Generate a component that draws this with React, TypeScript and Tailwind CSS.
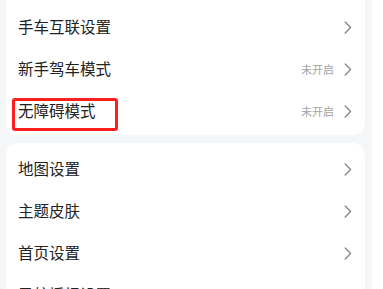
import { ReactNode } from 'react';

const font = { fontFamily: '"Noto Sans CJK SC", "Noto Sans", sans-serif' };

function Chevron() {
  return (
    <svg width="8" height="13" viewBox="0 0 8 13" fill="none" className="shrink-0">
      <path d="M1.2 1 L6.6 6.5 L1.2 12" stroke="#8a8a8a" strokeWidth="1.4" strokeLinecap="round" strokeLinejoin="round" />
    </svg>
  );
}

function Row({ label, value, children }: { label: string; value?: string; children?: ReactNode }) {
  return (
    <div className="relative flex h-[42px] items-center justify-between pl-[12px] pr-[13px]">
      <span className="text-[15.5px] text-[#222]">{label}</span>
      <div className="flex items-center gap-[10px]">
        {value && <span className="text-[11px] text-[#a3a3a3]">{value}</span>}
        <Chevron />
      </div>
      {children}
    </div>
  );
}

export default function App() {
  return (
    <div className="h-[289px] w-[383px] overflow-hidden bg-white" style={font}>
      <div className="flex h-full w-[372px] flex-col gap-[8px] bg-[#f5f6f8] pl-[6px] pr-[7px]">
        <div className="rounded-b-[12px] bg-white pb-[3px] pt-[6px]">
          <Row label="手车互联设置" />
          <Row label="新手驾车模式" value="未开启" />
          <Row label="无障碍模式" value="未开启">
            {/* highlight box */}
            <div className="absolute left-[6px] top-[8px] h-[33px] w-[106px] rounded-[3px] border-[3px] border-[#ff1f1f]" />
          </Row>
        </div>
        <div className="rounded-[12px] bg-white pt-[5px]">
          <Row label="地图设置" />
          <Row label="主题皮肤" />
          <Row label="首页设置" />
          <Row label="导航播报设置" />
        </div>
      </div>
    </div>
  );
}
